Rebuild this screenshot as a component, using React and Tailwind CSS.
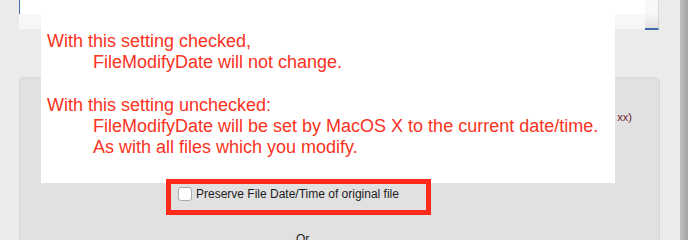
export default function App() {
  return (
    <div className="relative flex h-[240px] w-[688px] overflow-hidden bg-[#ebebeb] font-['Liberation_Sans',Arial,sans-serif]">
      <div className="flex flex-1 flex-col pl-[19px]">
        {/* top field */}
        <div className="flex h-[30px]">
          <div className="flex w-[626px] flex-col">
            <div className="h-[14px] border-l border-[#3f6ea8] bg-white" />
            <div className="h-[15px] bg-[#f7f7f7]" />
          </div>
          <div className="flex w-[14px] flex-col">
            <div className="h-[14px] border-r border-[#d9d9d9] bg-[#f8f8f8]" />
            <div className="h-[16px] border-r border-b-2 border-r-[#d4d4d4] border-b-[#3c6ba5] bg-gradient-to-b from-[#f6f6f6] to-[#e2e2e2]" />
          </div>
        </div>

        {/* group box */}
        <div className="mt-[47px] flex w-[641px] flex-1 flex-col rounded-t-[5px] border border-b-0 border-[#d6d6d6] bg-[#e1e1e1]">
          <div className="mt-[32px] pr-[27px] text-right text-[11px] leading-[14px] text-[#6e1a28]">
            (yyyy:mm:dd hh:mm:ss xx)
          </div>

          <div className="relative z-10 ml-[146px] mt-[55px] flex h-[36px] w-[265px] items-start border-[5px] border-[#ff2a1a] pl-[7px] pt-[3px]">
            <label className="flex items-center gap-[4px] text-[12px] leading-[14px] text-[#1c1c1c]">
              <input
                type="checkbox"
                className="h-[14px] w-[14px] appearance-none rounded-[3px] border border-[#a9a9a9] bg-white"
              />
              <span>Preserve File Date/Time of original file</span>
            </label>
          </div>

          <div className="ml-[276px] mt-[17px] text-[12px] leading-[14px] text-[#1c1c1c]">Or</div>
        </div>
      </div>

      <div className="w-[8px] bg-gradient-to-r from-[#c2c2c2] to-[#a3a3a3]" />

      {/* popup note */}
      <div className="absolute left-[41px] top-0 h-[183px] w-[574px] bg-white pl-[6px] pt-[31px] text-[18px] leading-[21.3px] text-[#fa3223]">
        <p>With this setting checked,</p>
        <p className="pl-[46px]">FileModifyDate will not change.</p>
        <p>&nbsp;</p>
        <p>With this setting unchecked:</p>
        <p className="pl-[46px]">FileModifyDate will be set by MacOS X to the current date/time.</p>
        <p className="pl-[46px]">As with all files which you modify.</p>
      </div>
    </div>
  );
}
